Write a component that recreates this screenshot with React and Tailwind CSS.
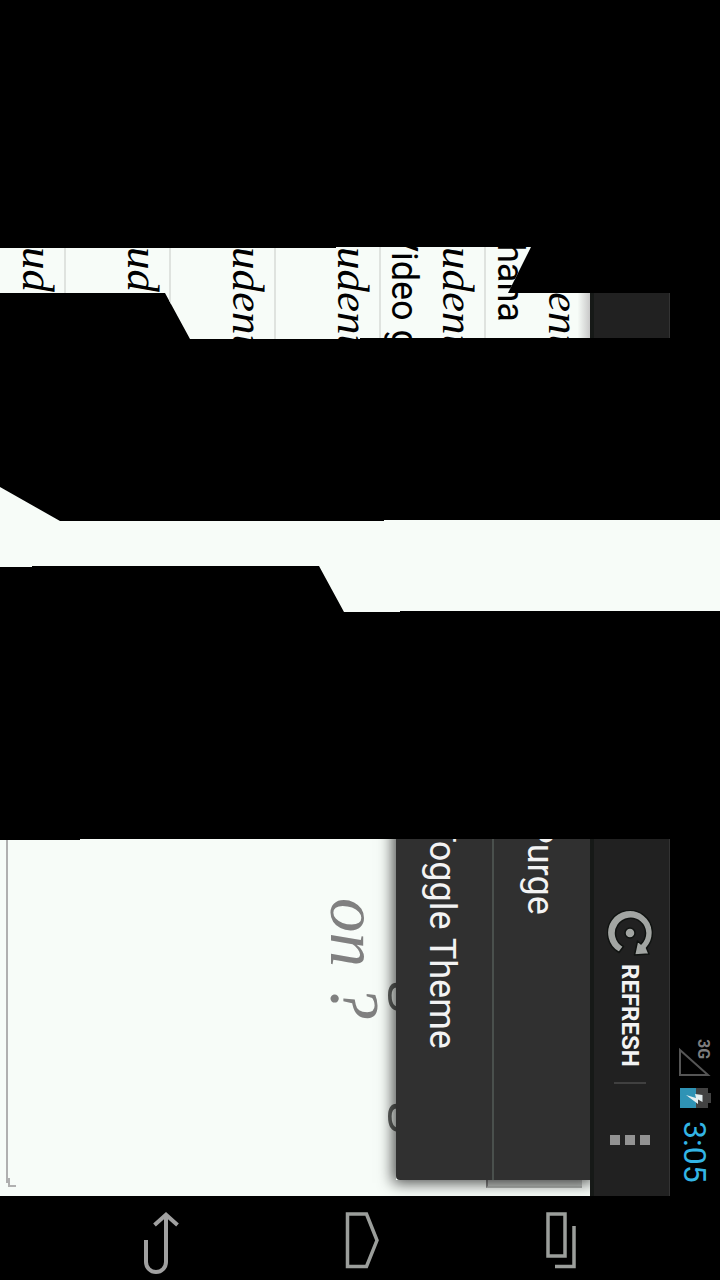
import React from "react";

const entries = [
  { id: 1, width: "w-[66px]" },
  { id: 2, width: "w-[105px]" },
  { id: 3, width: "w-[105px]" },
  { id: 4, width: "w-[105px]" },
  { id: 5, width: "w-[105px]", title: "Video g", offset: "-mt-[18px]" },
  { id: 6, width: "w-[104px]", title: "hana", offset: "-mt-1", last: true },
];

function EntryList() {
  return (
    <section className="flex h-[92px] overflow-hidden bg-[#f7fcf8] text-black [clip-path:polygon(0_1px,336px_1px,336px_0,531px_0,508px_46px,670px_46px,670px_91px,360px_91px,360px_92px,190px_92px,165px_46px,0_46px)]">
      {entries.map((e) => (
        <div
          key={e.id}
          className={`flex shrink-0 items-start justify-end gap-2.5 ${e.width} ${
            e.last
              ? "bg-linear-to-r from-transparent from-88% to-[#c8c8c8] pr-1"
              : "border-r-2 border-[#dfe3df] pr-1"
          }`}
        >
          {e.title && (
            <span
              className={`whitespace-nowrap font-[Roboto,sans-serif] text-[36px] leading-[44px] [writing-mode:vertical-rl] ${e.offset}`}
            >
              {e.title}
            </span>
          )}
          <span className="whitespace-nowrap font-['Liberation_Serif',serif] text-[45px] italic leading-[44px] [writing-mode:vertical-rl]">
            udent
          </span>
        </div>
      ))}
      <div className="w-20 shrink-0 border-l-4 border-r border-l-[#161917] border-r-[#333] bg-[#212121]" />
      <div className="flex-1 bg-black" />
    </section>
  );
}

function RefreshIcon() {
  return (
    <svg width="46" height="46" viewBox="0 0 46 46" aria-hidden="true">
      <g stroke="#101311" strokeWidth="1.500" strokeLinejoin="round">
        <path
          d="M12 42.500 A22.500 22.500 0 1 1 39.500 38 L42 44 L27.500 45 L30.500 31 L34 34 A15 15 0 1 0 16.500 36.500 Z"
          fill="#a2a5a2"
        />
        <circle cx="23" cy="23" r="5" fill="#a2a5a2" />
      </g>
    </svg>
  );
}

function ActionBar() {
  return (
    <div className="flex w-20 shrink-0 flex-col items-center border-l-4 border-r border-l-[#161917] border-r-[#333] bg-[#212121] pr-1 pt-[71px]">
      <button className="flex flex-col items-center gap-2 font-[Roboto,sans-serif] text-2xl font-bold leading-8 text-[#f3f3f3]">
        <RefreshIcon />
        <span className="[writing-mode:vertical-rl]">REFRESH</span>
      </button>
      <div className="mt-[15px] h-0.5 w-8 bg-[#404040]" />
      <button aria-label="More options" className="mt-[51px] flex gap-[5px]">
        <span className="size-2.5 bg-[#929292]" />
        <span className="size-2.5 bg-[#929292]" />
        <span className="size-2.5 bg-[#929292]" />
      </button>
    </div>
  );
}

function StatusBar() {
  return (
    <div className="flex w-[50px] shrink-0 flex-col items-center bg-black pt-[200px] font-[Roboto,sans-serif]">
      <div className="relative">
        <svg width="32" height="38" viewBox="0 0 32 38" aria-hidden="true">
          <path d="M1 11 V36 H29 Z" fill="none" stroke="#555" strokeWidth="2" />
        </svg>
        <span className="absolute -right-0.5 top-0 text-base font-bold leading-5 text-[#7d7d7d] [writing-mode:vertical-rl]">
          3G
        </span>
      </div>
      <svg className="mt-[11px]" width="32" height="20" viewBox="0 0 32 20" aria-hidden="true">
        <path d="M17 0 H29 V5 H32 V15 H29 V20 H17 Z" fill="#424242" />
        <path d="M1 0 H17 V20 H1 Z" fill="#2f93b5" />
        <path d="M7 7 L17 10 L16 6 L23.500 7 V14 L19 11.500 V16 Z" fill="#e4eef0" />
      </svg>
      <time className="mt-[13px] text-[32px] leading-9 text-[#33b5e5] [writing-mode:vertical-rl]">
        3:05
      </time>
    </div>
  );
}

function OverflowMenu() {
  return (
    <div
      role="menu"
      className="absolute right-0 top-0 flex h-[341px] w-[194px] overflow-hidden rounded-bl-sm bg-[#303030] font-[Roboto,sans-serif] text-[36px] leading-[44px] text-[#f3f3f3]"
    >
      <button role="menuitem" className="flex w-[98px] items-start justify-center border-r-2 border-[#4a504d] pr-1">
        <span className="-mt-[18px] whitespace-nowrap [writing-mode:vertical-rl]">Toggle Theme</span>
      </button>
      <button role="menuitem" className="flex flex-1 items-start justify-center pr-1">
        <span className="-mt-[18px] whitespace-nowrap [writing-mode:vertical-rl]">Purge</span>
      </button>
    </div>
  );
}

function Reader() {
  return (
    <section className="flex h-[357px] [clip-path:polygon(0_1px,80px_1px,80px_0,100%_0,100%_100%,0_100%)]">
      <main className="relative flex min-w-0 flex-1 items-start overflow-hidden bg-[#f7fcf8]">
        <svg className="ml-1.5 shrink-0" width="12" height="357" viewBox="0 0 12 357" aria-hidden="true">
          <path d="M1 0 V344 M3 339 V347 H10" fill="none" stroke="#b0b0b0" strokeWidth="2" />
        </svg>
        <h1 className="ml-[298px] mt-[59px] whitespace-nowrap font-['Liberation_Serif',serif] text-[69px] italic leading-[76px] text-[#808080] [writing-mode:vertical-rl]">
          on ?
        </h1>
        <div className="mt-[143px] flex flex-col gap-[91px] font-['Open_Sans',sans-serif] text-[56px] leading-[64px] text-[#606360]">
          <span className="[writing-mode:vertical-rl]">g</span>
          <span className="[writing-mode:vertical-rl]">g</span>
        </div>
        <div className="absolute right-2 top-[330px] h-[19px] w-24 border-b-2 border-l-2 border-[#b4b8b5] border-l-[#888] bg-[#c6cac7]" />
        <div className="absolute -top-4 right-0 h-[357px] w-[194px] shadow-[0_0_14px_3px_rgba(0,0,0,0.7)]" />
        <OverflowMenu />
      </main>
      <ActionBar />
      <StatusBar />
    </section>
  );
}

function NavigationBar() {
  return (
    <nav className="flex h-[84px] items-start bg-black pl-[142px] pt-4">
      <button aria-label="Back">
        <svg width="38" height="64" viewBox="0 0 38 64" fill="none" stroke="#a0a0a0" strokeWidth="4" aria-hidden="true">
          <path d="M4 28 V50 A10 10 0 0 0 24 50 V3" />
          <path d="M12.500 13 L24 2.700 L35.500 13" />
        </svg>
      </button>
      <button aria-label="Home" className="ml-[165px]">
        <svg width="36" height="60" viewBox="0 0 36 60" fill="none" stroke="#9b9e9b" strokeWidth="3.500" aria-hidden="true">
          <path d="M2.500 2 H21.500 L32 28.300 L21.500 54.500 H2.500 Z" />
        </svg>
      </button>
      <button aria-label="Recent apps" className="ml-[164px]">
        <svg width="34" height="60" viewBox="0 0 34 60" fill="none" stroke="#9b9e9b" strokeWidth="3.500" aria-hidden="true">
          <path d="M3 2 H20 V44 H3 Z M29 14 V54.500 H10" />
        </svg>
      </button>
    </nav>
  );
}

export default function App() {
  return (
    <div className="flex min-h-screen w-full flex-col bg-black pt-[247px]">
      <EntryList />
      <div className="mt-[148px] h-[125px] bg-[#f7fcf8] [clip-path:polygon(0_0,60px_34px,384px_34px,384px_33px,100%_33px,100%_124px,400px_124px,400px_125px,344px_125px,319px_79px,32px_79px,32px_80px,0_80px)]" />
      <div className="mt-[227px]">
        <Reader />
      </div>
      <NavigationBar />
    </div>
  );
}
